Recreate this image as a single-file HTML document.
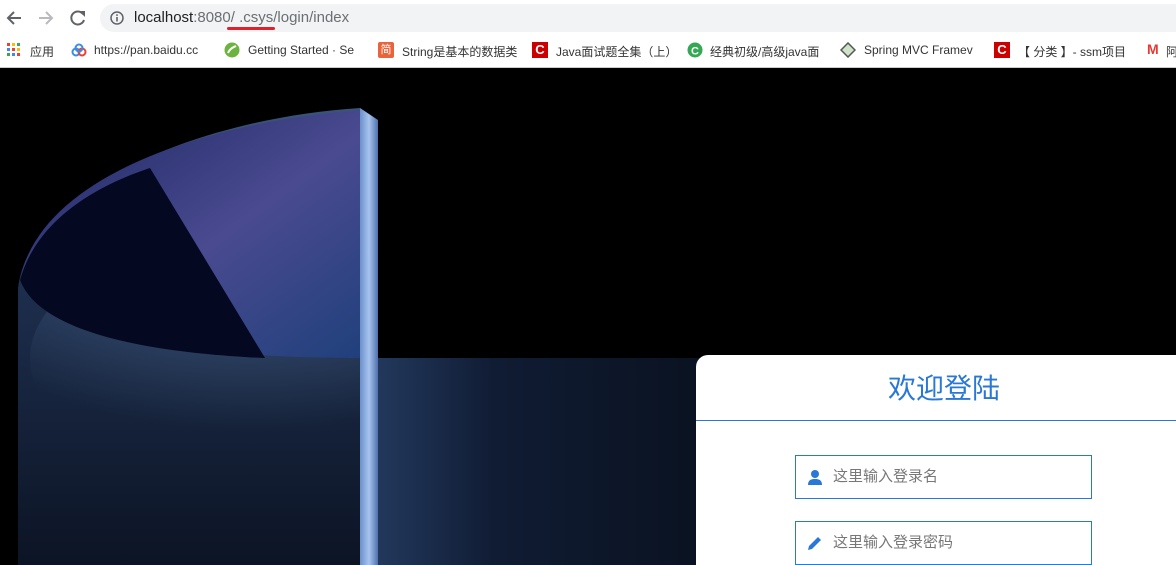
<!DOCTYPE html>
<html><head><meta charset="utf-8"><style>
*{margin:0;padding:0;box-sizing:border-box}
html,body{width:1176px;height:565px;overflow:hidden}
body{font-family:"Liberation Sans","Noto Sans CJK SC",sans-serif;background:#000;position:relative}
.top{position:absolute;left:0;top:0;width:1176px;height:36px;background:#fff}
.url{position:absolute;left:100px;top:4px;width:1076px;height:28px;background:#f1f3f4;border-radius:14px 0 0 14px;font-size:15px;color:#202124;line-height:28px;padding-left:34px}
.bm{position:absolute;left:0;top:36px;width:1176px;height:32px;background:#fff;border-bottom:1px solid #ccc;font-size:12px;color:#333}
.bm span{position:absolute;top:7px;white-space:nowrap}
.ic{position:absolute;top:6px;width:16px;height:16px}
.card{position:absolute;left:696px;top:355px;width:480px;height:210px;background:#fff;border-radius:12px 0 0 0;overflow:hidden}
.title{position:absolute;left:0;top:0;width:496px;height:66px;border-bottom:1px solid #2a78d6;text-align:center;font-size:28px;color:#2a78d6;line-height:68px}
.inp{position:absolute;left:99px;width:297px;height:44px;border:1px solid #2a78d6;font-size:15px;color:#777;line-height:42px;padding-left:37px}
</style></head><body>
<div class="top">
<svg style="position:absolute;left:5px;top:9px" width="18" height="18"><path d="M16 9H3M9 3L3 9l6 6" stroke="#5f6368" stroke-width="2" fill="none"/></svg>
<svg style="position:absolute;left:37px;top:9px" width="18" height="18"><path d="M2 9h13M9 3l6 6-6 6" stroke="#b8babd" stroke-width="2" fill="none"/></svg>
<svg style="position:absolute;left:69px;top:9px" width="18" height="18"><path d="M14 5A6.5 6.5 0 1 0 15 11" stroke="#5f6368" stroke-width="2" fill="none"/><path d="M10 2h6v6z" fill="#5f6368"/></svg>
<div class="url"><svg style="position:absolute;left:10px;top:7px" width="14" height="14"><circle cx="7" cy="7" r="6" stroke="#5f6368" stroke-width="1.5" fill="none"/><rect x="6.2" y="6" width="1.6" height="4.5" fill="#5f6368"/><rect x="6.2" y="3.3" width="1.6" height="1.6" fill="#5f6368"/></svg>localhost<span style="color:#6b6f73">:8080/&nbsp;.csys/login/index</span></div>
<div style="position:absolute;left:227px;top:27px;width:48px;height:3px;background:#e0202a;border-radius:2px"></div>
</div>
<div class="bm">
<svg class="ic" style="left:7px;top:7px" width="14" height="14"><rect x="0" y="0" width="3" height="3" fill="#e94235"/><rect x="5" y="0" width="3" height="3" fill="#fbbc05"/><rect x="10" y="0" width="3" height="3" fill="#34a853"/><rect x="0" y="5" width="3" height="3" fill="#4285f4"/><rect x="5" y="5" width="3" height="3" fill="#e94235"/><rect x="10" y="5" width="3" height="3" fill="#fbbc05"/><rect x="0" y="10" width="3" height="3" fill="#34a853"/><rect x="5" y="10" width="3" height="3" fill="#4285f4"/><rect x="10" y="10" width="3" height="3" fill="#e94235"/></svg>
<span style="left:30px">应用</span>
<svg class="ic" style="left:71px;top:7px" width="16" height="16"><circle cx="5" cy="9" r="3.5" stroke="#3a8ee6" stroke-width="2" fill="none"/><circle cx="11" cy="9" r="3.5" stroke="#e94235" stroke-width="2" fill="none"/><circle cx="8" cy="5" r="3.5" stroke="#3a8ee6" stroke-width="2" fill="none"/></svg>
<span style="left:94px">https://pan.baidu.cc</span>
<svg class="ic" style="left:224px" width="16" height="16"><circle cx="8" cy="8" r="7.5" fill="#6db33f"/><path d="M4 11c2-5 6-6 8-7" stroke="#fff" stroke-width="2" fill="none"/></svg>
<span style="left:248px">Getting Started · Se</span>
<div class="ic" style="left:378px;background:#e8643c;color:#fff;font-size:11px;text-align:center;line-height:16px;border-radius:2px">简</div>
<span style="left:402px">String是基本的数据类</span>
<div class="ic" style="left:532px;background:#c00;color:#fff;font-size:13px;font-weight:bold;text-align:center;line-height:16px">C</div>
<span style="left:556px">Java面试题全集（上）</span>
<svg class="ic" style="left:687px" width="16" height="16"><circle cx="8" cy="8" r="7.5" fill="#34a853"/><text x="4" y="12.5" font-size="11" font-weight="bold" fill="#fff" font-family="Liberation Sans">C</text></svg>
<span style="left:710px">经典初级/高级java面</span>
<svg class="ic" style="left:840px" width="16" height="16"><path d="M8 1l7 7-7 7-7-7z" stroke="#555" stroke-width="1.5" fill="#cfe3c8"/></svg>
<span style="left:864px">Spring MVC Framev</span>
<div class="ic" style="left:994px;background:#c00;color:#fff;font-size:13px;font-weight:bold;text-align:center;line-height:16px">C</div>
<span style="left:1018px">【 分类 】- ssm项目</span>
<span style="left:1147px;color:#e53935;font-weight:bold;font-size:14px;top:5px">M</span><span style="left:1166px">阿</span>
</div>
<svg style="position:absolute;left:0;top:68px" width="1176" height="497">
<defs>
<clipPath id="sh"><path d="M18 497V220C30 120 200 50 360 40V497Z"/></clipPath>
<linearGradient id="lb" x1="0" y1="0" x2="0" y2="1"><stop offset="0" stop-color="#3a5478"/><stop offset="0.35" stop-color="#1e3050"/><stop offset="1" stop-color="#0c1424"/></linearGradient>
<linearGradient id="rb" x1="0" y1="0" x2="1" y2="0"><stop offset="0" stop-color="#22385c"/><stop offset="0.35" stop-color="#101c34"/><stop offset="1" stop-color="#0a1220"/></linearGradient>
<linearGradient id="cup" x1="0" y1="0" x2="1" y2="1"><stop offset="0" stop-color="#1a2660"/><stop offset="0.55" stop-color="#4a4a90"/><stop offset="1" stop-color="#20407c"/></linearGradient>
<linearGradient id="bar" x1="0" y1="0" x2="1" y2="0"><stop offset="0" stop-color="#6a90cc"/><stop offset="0.5" stop-color="#a8c4ee"/><stop offset="1" stop-color="#4e70ae"/></linearGradient>
<radialGradient id="glow" cx="0.5" cy="0" r="0.8"><stop offset="0" stop-color="#4c6890" stop-opacity="0.8"/><stop offset="1" stop-color="#4c6890" stop-opacity="0"/></radialGradient>
</defs>
<rect x="378" y="290" width="330" height="210" fill="url(#rb)"/>
<path d="M18 497V220C30 120 200 50 360 40V497Z" fill="url(#lb)"/>
<ellipse cx="250" cy="290" rx="220" ry="120" fill="url(#glow)" clip-path="url(#sh)"/>
<path d="M20 212C40 110 200 55 360 42V290C200 290 40 270 20 212Z" fill="url(#cup)"/>
<path d="M20 212C40 140 120 110 150 100L265 290C150 285 40 265 20 212Z" fill="#040820"/>
<path d="M360 40L378 52V497H360Z" fill="url(#bar)"/>
</svg>
<div class="card">
<div class="title">欢迎登陆</div>
<div class="inp" style="top:100px"><svg style="position:absolute;left:11px;top:13px" width="16" height="16"><circle cx="8" cy="5" r="4" fill="#2a78d6"/><path d="M1 16c0-5 3-6 7-6s7 1 7 6z" fill="#2a78d6"/></svg>这里输入登录名</div>
<div class="inp" style="top:166px"><svg style="position:absolute;left:11px;top:13px" width="16" height="16"><path d="M1 15l1-4L11 2l3 3-9 9z" fill="#2a78d6"/></svg>这里输入登录密码</div>
</div>
</body></html>
